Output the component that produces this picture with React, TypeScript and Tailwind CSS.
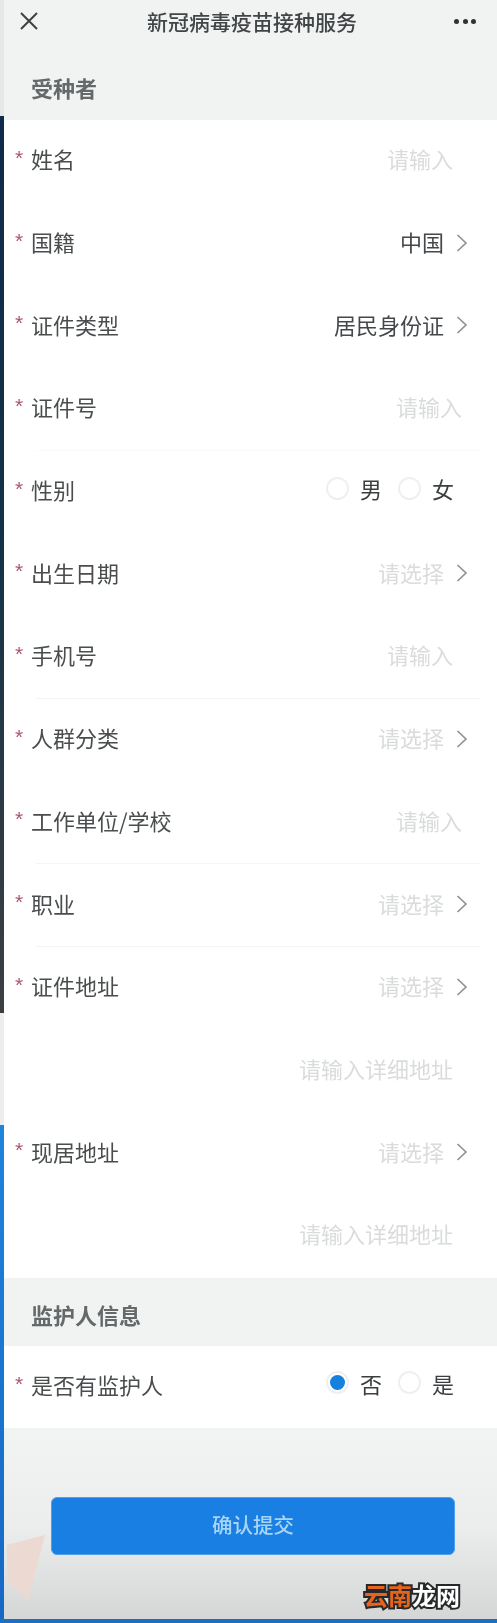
import React from "react";

const font = "[font-family:'Noto_Sans_CJK_SC','Noto_Sans',sans-serif]";

function Chevron() {
  return (
    <svg width="12" height="20" viewBox="0 0 12 20" fill="none" className="shrink-0">
      <path d="M1.5 2 L10 10 L1.5 18" stroke="#8b8f90" strokeWidth="1.6" />
    </svg>
  );
}

function Radio({ label, on }: { label: string; on?: boolean }) {
  return (
    <div className="flex items-center">
      <span className="w-[23px] h-[23px] rounded-full border-2 border-[#eef0f0] bg-white flex items-center justify-center">
        {on && <span className="w-[15px] h-[15px] rounded-full bg-[#1680dc]" />}
      </span>
      <span className="ml-[11px] w-[22px] text-[22px] leading-none text-[#3c3f40]">{label}</span>
    </div>
  );
}

function Row({
  label,
  required = true,
  children,
  divider,
  pad = "pb-[6px]",
}: {
  label?: string;
  required?: boolean;
  children?: React.ReactNode;
  divider?: string;
  pad?: string;
}) {
  return (
    <div className={`h-[82.7px] bg-white relative flex items-center pl-[11px] ${pad}`}>
      {required && label ? (
        <span className="w-[16px] -mt-[2px] text-[21px] leading-none text-[#a9596f] font-['Liberation_Sans']">*</span>
      ) : (
        <span className="w-[16px]" />
      )}
      <span className="text-[22px] leading-none text-[#4a4d4e]">{label}</span>
      <div className="ml-auto flex items-center">{children}</div>
      {divider && <div className={`absolute left-[32px] right-[17px] bottom-0 h-px ${divider}`} />}
    </div>
  );
}

function Holder({ text, pr }: { text: string; pr: string }) {
  return <span className={`text-[22px] leading-none text-[#d9dbdc] ${pr}`}>{text}</span>;
}

function Select({ text, value }: { text: string; value?: boolean }) {
  return (
    <div className="flex items-center pr-[29px]">
      <span className={`text-[22px] leading-none ${value ? "text-[#45484a]" : "text-[#d9dbdc]"}`}>{text}</span>
      <span className="ml-[12px] mt-[3px]">
        <Chevron />
      </span>
    </div>
  );
}

function Section({ title, pad }: { title: string; pad: string }) {
  return (
    <div className={`h-[68px] flex items-center pl-[27px] ${pad}`}>
      <span className="text-[22px] leading-none font-bold text-[#65696a]">{title}</span>
    </div>
  );
}

export default function App() {
  return (
    <div className={`relative w-[497px] h-[1623px] overflow-hidden flex bg-[#f1f3f3] ${font} blur-[0.6px]`}>
      <div className="w-[4px] shrink-0 flex flex-col">
        <div className="h-[116px] bg-[#e6e8e8]" />
        <div className="h-[897px] bg-gradient-to-b from-[#11294a] via-[#143347] to-[#3c3f42]" />
        <div className="h-[112px] bg-[#eceeee]" />
        <div className="flex-1 bg-gradient-to-b from-[#1f83dc] to-[#1668c4]" />
      </div>

      <div className="flex-1 flex flex-col">
        <div className="h-[52px] grid grid-cols-[1fr_auto_1fr] items-start pl-[15px] pr-[21px] pt-[11px]">
          <svg width="20" height="20" viewBox="0 0 20 20" fill="none">
            <path d="M2 2 L18 18 M18 2 L2 18" stroke="#3d4042" strokeWidth="2" />
          </svg>
          <span className="text-[21px] leading-[22px] font-medium text-[#424546] ml-[9px] -mt-[1px]">新冠病毒疫苗接种服务</span>
          <div className="flex items-center justify-end gap-[3.5px] h-[20px]">
            <span className="w-[5px] h-[5px] rounded-full bg-[#2e3032]" />
            <span className="w-[5px] h-[5px] rounded-full bg-[#2e3032]" />
            <span className="w-[5px] h-[5px] rounded-full bg-[#2e3032]" />
          </div>
        </div>

        <Section title="受种者" pad="pt-[2px]" />

        <Row label="姓名"><Holder text="请输入" pr="pr-[44px]" /></Row>
        <Row label="国籍"><Select text="中国" value /></Row>
        <Row label="证件类型"><Select text="居民身份证" value /></Row>
        <Row label="证件号" divider="bg-[#fafafa]"><Holder text="请输入" pr="pr-[35px]" /></Row>
        <Row label="性别">
          <div className="flex items-center gap-[16px] pr-[43px] -mt-[2px]">
            <Radio label="男" />
            <Radio label="女" />
          </div>
        </Row>
        <Row label="出生日期"><Select text="请选择" /></Row>
        <Row label="手机号" divider="bg-[#f3f4f4]"><Holder text="请输入" pr="pr-[44px]" /></Row>
        <Row label="人群分类"><Select text="请选择" /></Row>
        <Row label="工作单位/学校" divider="bg-[#f3f4f4]"><Holder text="请输入" pr="pr-[35px]" /></Row>
        <Row label="职业" divider="bg-[#f3f4f4]"><Select text="请选择" /></Row>
        <Row label="证件地址"><Select text="请选择" /></Row>
        <Row required={false}><Holder text="请输入详细地址" pr="pr-[44px]" /></Row>
        <Row label="现居地址"><Select text="请选择" /></Row>
        <Row required={false}><Holder text="请输入详细地址" pr="pr-[44px]" /></Row>

        <Section title="监护人信息" pad="pt-[4px]" />

        <Row label="是否有监护人" pad="pb-[5px]">
          <div className="flex items-center gap-[16px] pr-[43px] -mt-[3px]">
            <Radio label="否" on />
            <Radio label="是" />
          </div>
        </Row>

        <div className="flex-1 bg-gradient-to-b from-[#f2f4f4] via-[#eceeee] to-[#d4d6d6] pt-[69px] pl-[47px]">
          <button className="w-[404px] h-[58px] rounded-[6px] bg-[#1a7fe2] border border-[#4f9fe8] flex items-center justify-center pb-[4px] text-[20.5px] leading-none font-medium text-[#a9d5f5]">
            确认提交
          </button>
        </div>
      </div>

      <svg className="absolute left-[4px] top-[1530px]" width="46" height="75" viewBox="0 0 46 75">
        <polygon points="3,15 41,5 24,70 3,50" fill="#ecd9d2" />
      </svg>

      <div className="absolute left-[364px] top-[1580px] text-[24px] leading-[30px] font-bold [-webkit-text-stroke:4px_#26282a] [paint-order:stroke_fill]">
        <span className="text-[#e8641c]">云南</span>
        <span className="text-white">龙网</span>
      </div>

      <div className="absolute left-0 right-0 bottom-0 h-[4px] bg-[#1f6fc0] overflow-hidden">
        <span className="absolute left-[424px] top-0 text-[16px] leading-[24px] font-bold text-white tracking-[3px] font-['Liberation_Sans']">8:41:0</span>
      </div>
    </div>
  );
}
